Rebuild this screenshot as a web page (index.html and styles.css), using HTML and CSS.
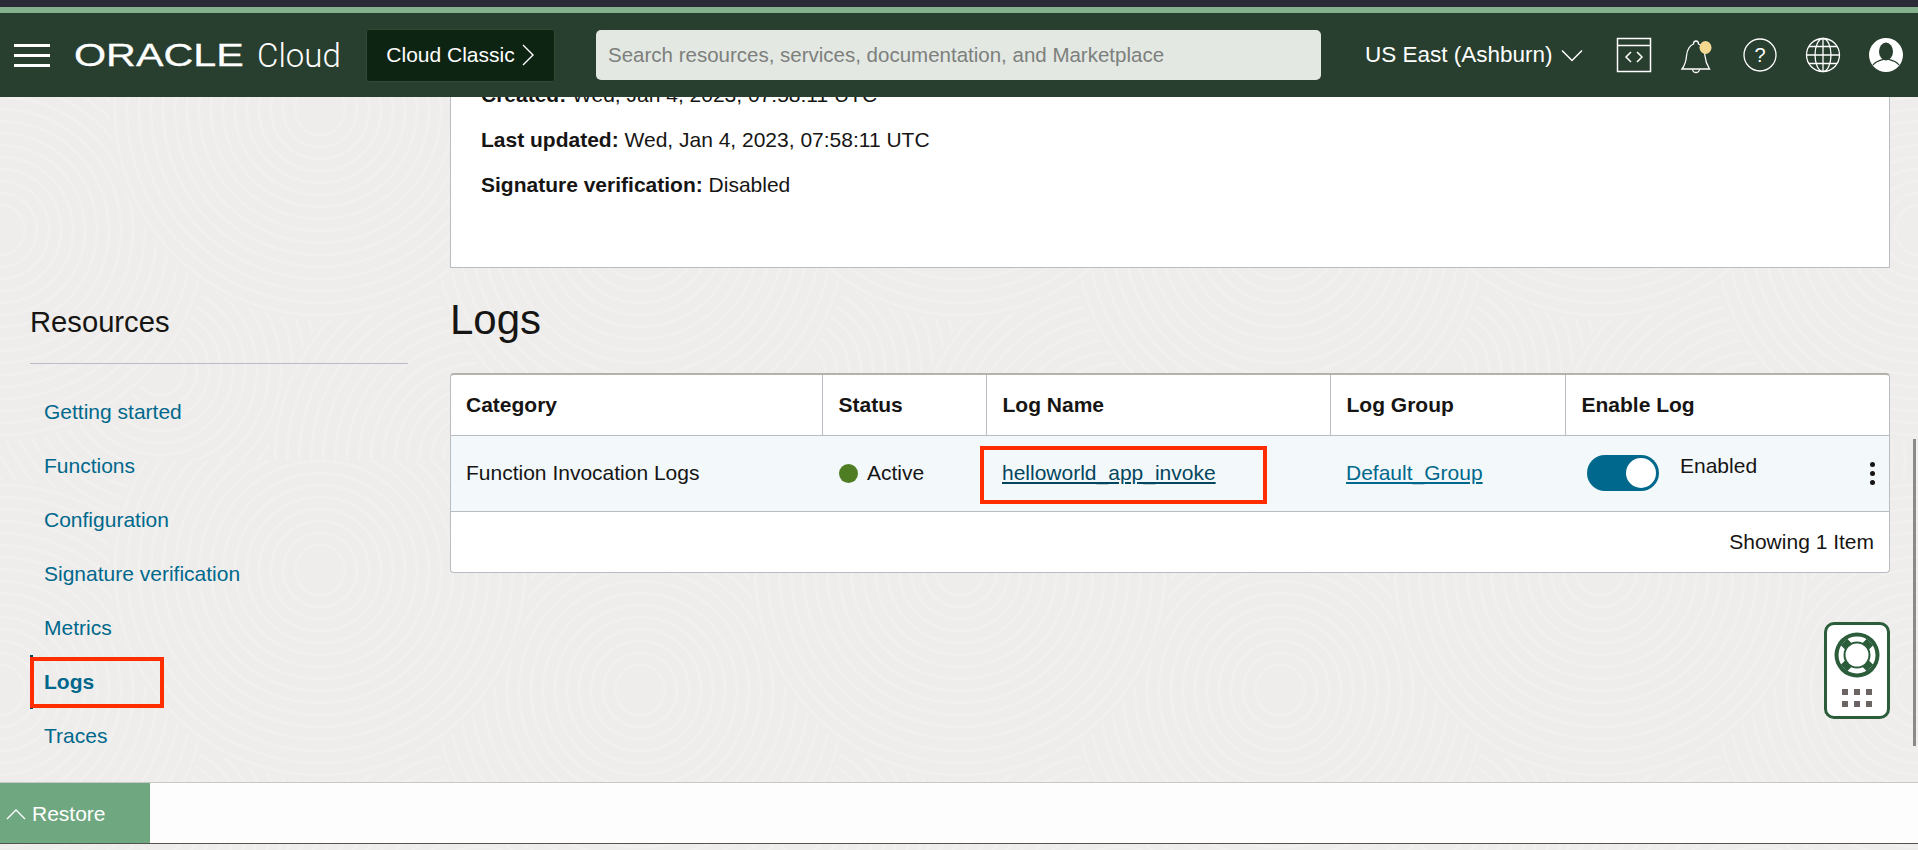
FILE: index.html
```html
<!DOCTYPE html>
<html lang="en">
<head>
    <meta charset="UTF-8">
    <title>Logs - Oracle Cloud</title>
    <link rel="stylesheet" href="styles.css">
</head>
<body>
<svg class="texture" width="1918" height="850" aria-hidden="true">
    <defs>
        <g id="swirl">
            <circle r="210" fill="#eeedeb"/>
            <g fill="none" stroke="#f1f0ee" stroke-width="3">
                <circle r="205"/><circle r="193"/><circle r="181"/><circle r="169"/><circle r="157"/><circle r="145"/>
                <circle r="133"/><circle r="121"/><circle r="109"/><circle r="97"/><circle r="85"/><circle r="73"/>
                <circle r="61"/><circle r="49"/><circle r="37"/><circle r="25"/>
            </g>
        </g>
        <pattern id="swirls" width="640" height="460" patternUnits="userSpaceOnUse">
            <use href="#swirl" x="160" y="370"/>
            <use href="#swirl" x="160" y="-90"/>
            <use href="#swirl" x="480" y="460"/>
            <use href="#swirl" x="480" y="0"/>
            <use href="#swirl" x="0" y="230"/>
            <use href="#swirl" x="640" y="230"/>
            <use href="#swirl" x="320" y="110"/>
        </pattern>
    </defs>
    <rect width="1918" height="850" fill="url(#swirls)"/>
</svg>

<div class="top-strip"></div>
<div class="accent-strip"></div>

<header class="header">
    <button class="hamburger" aria-label="Menu"><span></span><span></span><span></span></button>
    <div class="brand">
        <span class="brand-oracle"><span>ORACLE</span></span>
        <span class="brand-cloud">Cloud</span>
    </div>
    <div class="classic">Cloud Classic
        <svg width="14" height="24" viewBox="0 0 14 24"><path d="M2 2l10 10L2 22" fill="none" stroke="#fff" stroke-width="1.4"/></svg>
    </div>
    <input class="search" type="text" placeholder="Search resources, services, documentation, and Marketplace">
    <div class="region">US East (Ashburn)
        <svg width="22" height="13" viewBox="0 0 22 13"><path d="M1 1.5l10 10 10-10" fill="none" stroke="#fff" stroke-width="1.5"/></svg>
    </div>
    <div class="header-icons">
        <svg width="36" height="36" viewBox="0 0 36 36" fill="none" stroke="#fff" stroke-width="1.5">
            <rect x="1.5" y="1.5" width="33" height="33"/>
            <path d="M1.5 8.5h33M15 15l-5 5 5 5M21 15l5 5-5 5"/>
        </svg>
        <svg class="bell" width="36" height="38" viewBox="0 0 36 38" fill="none" stroke="#fff" stroke-width="1.3">
            <path d="M3 33c3-4 4-7 4.500-13 .5-7 4-11 7-12 0-4 5-4 5 0 3 1 6 5 6.500 12 .5 6 2 9 4.500 13z"/>
            <path d="M13.500 33a3.500 3.500 0 0 0 7 0"/>
            <ellipse cx="26.500" cy="11.500" rx="6" ry="6.500" fill="#f5d890" stroke="none"/>
        </svg>
        <svg width="36" height="36" viewBox="0 0 36 36" fill="none" stroke="#fff" stroke-width="1.3">
            <circle cx="18" cy="18" r="16"/>
            <text x="18" y="25" class="help-mark">?</text>
        </svg>
        <svg width="36" height="36" viewBox="0 0 36 36" fill="none" stroke="#fff" stroke-width="1.3">
            <circle cx="18" cy="18" r="16.500"/>
            <ellipse cx="18" cy="18" rx="8" ry="16.500"/>
            <path d="M18 1.500v33M1.500 18h33M4 9.500h28M4 26.500h28"/>
        </svg>
        <svg width="36" height="36" viewBox="0 0 36 36">
            <circle cx="18" cy="18" r="17" fill="#fff"/>
            <ellipse cx="18" cy="14.500" rx="7" ry="9" fill="#283e2e"/>
            <path d="M5 28c3-4 8-5 10-5.500h6c2 .5 7 1.500 10 5.500" fill="none" stroke="#283e2e" stroke-width="1.200"/>
        </svg>
    </div>
</header>

<div class="main">
    <aside class="sidebar">
        <h3 class="resources-title">Resources</h3>
        <nav class="resources-nav">
            <a href="#">Getting started</a>
            <a href="#">Functions</a>
            <a href="#">Configuration</a>
            <a href="#">Signature verification</a>
            <a href="#">Metrics</a>
            <a href="#" class="selected">Logs</a>
            <a href="#">Traces</a>
        </nav>
    </aside>

    <section class="content">
        <div class="details">
            <p><b>Created:</b> Wed, Jan 4, 2023, 07:58:11 UTC</p>
            <p><b>Last updated:</b> Wed, Jan 4, 2023, 07:58:11 UTC</p>
            <p><b>Signature verification:</b> Disabled</p>
        </div>

        <h2 class="section-title">Logs</h2>

        <div class="table-card">
            <table class="logs-table">
                <colgroup>
                    <col class="col-category"><col class="col-status"><col class="col-name"><col class="col-group"><col>
                </colgroup>
                <thead>
                <tr>
                    <th>Category</th>
                    <th>Status</th>
                    <th>Log Name</th>
                    <th>Log Group</th>
                    <th>Enable Log</th>
                </tr>
                </thead>
                <tbody>
                <tr>
                    <td>Function Invocation Logs</td>
                    <td><span class="status"><i class="status-dot"></i>Active</span></td>
                    <td><a href="#" class="log-link">helloworld_app_invoke</a><span class="callout"></span></td>
                    <td><a href="#">Default_Group</a></td>
                    <td>
                        <div class="enable-cell">
                            <span class="toggle"><i></i></span>
                            <span class="enable-label">Enabled</span>
                            <span class="kebab"><i></i><i></i><i></i></span>
                        </div>
                    </td>
                </tr>
                </tbody>
            </table>
            <div class="table-footer">Showing 1 Item</div>
        </div>
    </section>
</div>

<div class="scrollbar"></div>

<div class="help-widget">
    <svg width="46" height="46" viewBox="0 0 46 46">
        <circle cx="23" cy="23" r="22.500" fill="#2b5d3b"/>
        <circle cx="23" cy="23" r="16" fill="none" stroke="#fff" stroke-width="5"/>
        <path d="M10 10l7 7M36 10l-7 7M10 36l7-7M36 36l-7-7" stroke="#2b5d3b" stroke-width="9"/>
        <circle cx="23" cy="23" r="11.500" fill="#fff"/>
    </svg>
    <div class="help-grid"><i></i><i></i><i></i><i></i><i></i><i></i></div>
</div>

<div class="restore-bar">
    <button class="restore">
        <svg width="20" height="12" viewBox="0 0 20 12"><path d="M1 11l9-9 9 9" fill="none" stroke="#fff" stroke-width="1.300"/></svg>
        Restore
    </button>
</div>
</body>
</html>
```

FILE: styles.css
```css
:root {
    --header: #283e2e;
    --link: #00688c;
    --link-dark: #04465e;
    --text: #161513;
    --border: #b9bcc2;
    --callout: #ff2d00;
}

* {
    margin: 0;
    padding: 0;
    box-sizing: border-box;
}

body {
    position: relative;
    width: 1918px;
    height: 850px;
    overflow: hidden;
    font-family: "Liberation Sans", Arial, sans-serif;
    font-size: 21px;
    color: var(--text);
    background-color: #eeedeb;
}

a {
    color: var(--link);
}

.texture {
    position: absolute;
    top: 0;
    left: 0;
    z-index: -1;
}

.top-strip {
    height: 7px;
    background-color: #2a2a36;
}

.accent-strip {
    height: 6px;
    background-color: #85b18f;
}

/* header */
.header {
    position: relative;
    z-index: 2;
    display: flex;
    align-items: center;
    height: 84px;
    padding-left: 14px;
    color: #fff;
    background-color: var(--header);
}

.hamburger {
    display: flex;
    flex-direction: column;
    gap: 7px;
    width: 36px;
    margin-right: 25px;
    background: none;
    border: none;
}

.hamburger span {
    height: 3px;
    background-color: #fff;
}

.brand {
    display: flex;
    align-items: center;
    width: 291px;
}

.brand-oracle {
    width: 171px;
    margin-left: -1px;
    margin-right: 12px;
    font-size: 32px;
    font-weight: 400;
    line-height: 1;
}

.brand-oracle span {
    display: inline-block;
    transform: scaleX(1.29);
    transform-origin: left center;
    -webkit-text-stroke: 0.3px #fff;
}

.brand-cloud {
    font-family: Roboto, sans-serif;
    font-size: 33px;
    font-weight: 300;
    line-height: 1;
}

.classic {
    display: flex;
    align-items: center;
    justify-content: center;
    gap: 6px;
    width: 189px;
    height: 53px;
    margin-right: 41px;
    font-size: 21px;
    background-color: #0e2413;
    border: 1px solid #2c4a34;
    border-radius: 3px;
}

.search {
    width: 725px;
    height: 50px;
    margin-right: 44px;
    padding: 0 12px;
    font-family: inherit;
    font-size: 20.5px;
    background-color: #e3e8e3;
    border: none;
    border-radius: 5px;
}

.search::placeholder {
    color: #7d7f7c;
}

.region {
    display: flex;
    align-items: center;
    gap: 8px;
    width: 251px;
    font-size: 22.5px;
}

.header-icons {
    display: flex;
    align-items: center;
    gap: 27px;
}

.help-mark {
    font-size: 20px;
    text-anchor: middle;
    fill: #fff;
    stroke: none;
}

/* page body */
.main {
    display: flex;
}

.sidebar {
    width: 450px;
    padding: 208px 42px 0 30px;
}

.resources-title {
    height: 59px;
    font-size: 29.2px;
    font-weight: 400;
    line-height: 34px;
    border-bottom: 1px solid var(--border);
}

.resources-nav {
    display: flex;
    flex-direction: column;
    padding-top: 21px;
}

.resources-nav a {
    height: 54px;
    padding-left: 14px;
    line-height: 54px;
    text-decoration: none;
}

.resources-nav .selected {
    position: relative;
    font-weight: 700;
    border-left: 3px solid var(--link-dark);
    padding-left: 11px;
}

.resources-nav .selected::after {
    content: "";
    position: absolute;
    top: 2px;
    left: -3px;
    width: 126px;
    height: 43px;
    border: 4px solid var(--callout);
}

.content {
    width: 1440px;
}

.details {
    height: 197px;
    margin-top: -26px;
    background-color: #fff;
    border: 1px solid var(--border);
}

.details p {
    height: 45px;
    padding-left: 30px;
    line-height: 45px;
}

.section-title {
    margin: 27px 0 28px;
    font-size: 42px;
    font-weight: 400;
    line-height: 50px;
}

/* logs table */
.table-card {
    background-color: #fff;
    border: 1px solid var(--border);
    border-top: 2px solid #b5b2aa;
    border-radius: 4px;
}

.logs-table {
    width: 100%;
    table-layout: fixed;
    border-collapse: collapse;
}

.col-category { width: 371px; }
.col-status { width: 164px; }
.col-name { width: 344px; }
.col-group { width: 235px; }

.logs-table th {
    height: 60px;
    padding-left: 16px;
    text-align: left;
    border-left: 1px solid var(--border);
    border-bottom: 1px solid var(--border);
}

.logs-table th:first-child {
    padding-left: 15px;
    border-left: none;
}

.logs-table td {
    height: 76px;
    padding-left: 16px;
    background-color: #f3f8fb;
    border-bottom: 1px solid var(--border);
}

.logs-table td:first-child {
    padding-left: 15px;
}

.status {
    display: flex;
    align-items: center;
    gap: 9px;
    margin-left: 1px;
}

.status-dot {
    width: 19px;
    height: 19px;
    background-color: #4f7d23;
    border-radius: 50%;
}

.logs-table td:nth-child(3) {
    position: relative;
}

.log-link {
    color: var(--link-dark);
}

.callout {
    position: absolute;
    top: 10px;
    left: -6px;
    width: 287px;
    height: 58px;
    border: 4px solid var(--callout);
}

.enable-cell {
    display: flex;
    align-items: flex-start;
    padding-right: 14px;
}

.toggle {
    display: flex;
    justify-content: flex-end;
    align-items: center;
    width: 72px;
    height: 36px;
    margin: 0 21px 0 6px;
    padding-right: 3px;
    background-color: var(--link);
    border-radius: 18px;
}

.toggle i {
    width: 30px;
    height: 30px;
    background-color: #fff;
    border-radius: 50%;
}

.enable-label {
    line-height: 22px;
}

.kebab {
    display: flex;
    flex-direction: column;
    gap: 4px;
    margin: 7px 0 0 auto;
}

.kebab i {
    width: 5px;
    height: 5px;
    background-color: #161513;
    border-radius: 50%;
}

.table-footer {
    height: 60px;
    padding-right: 15px;
    line-height: 60px;
    text-align: right;
}

/* floating bits */
.scrollbar {
    position: absolute;
    top: 439px;
    right: 2px;
    width: 3px;
    height: 307px;
    background-color: #8a8a8a;
}

.help-widget {
    position: absolute;
    top: 622px;
    left: 1824px;
    display: flex;
    flex-direction: column;
    align-items: center;
    gap: 11px;
    width: 66px;
    height: 97px;
    padding-top: 7px;
    background-color: #fff;
    border: 3px solid #2b5d3b;
    border-radius: 10px;
}

.help-grid {
    display: grid;
    grid-template-columns: repeat(3, 6px);
    gap: 6px;
}

.help-grid i {
    height: 6px;
    background-color: #6b6462;
}

.restore-bar {
    position: absolute;
    top: 782px;
    left: 0;
    z-index: 3;
    width: 100%;
    height: 62px;
    background-color: #fdfdfd;
    border-top: 1px solid #c8c8c8;
    border-bottom: 1px solid #55534f;
}

.restore {
    display: flex;
    align-items: center;
    gap: 6px;
    width: 150px;
    height: 100%;
    padding: 2px 0 0 6px;
    font-family: inherit;
    font-size: 21px;
    color: #fff;
    background-color: #6fa781;
    border: none;
}
```
